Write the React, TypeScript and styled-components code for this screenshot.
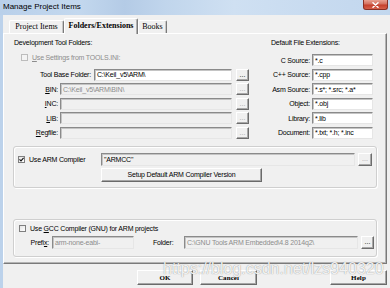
import React from "react";
import styled, { createGlobalStyle } from "styled-components";

const Global = createGlobalStyle`
  html, body { margin: 0; padding: 0; background: #f0f0f0; }
  body { width: 390px; height: 288px; overflow: hidden; }
`;

const Window = styled.div`
  position: relative;
  width: 390px;
  height: 288px;
  background: #f0f0f0;
  display: flex;
  flex-direction: column;
  overflow: hidden;
  font-family: "Liberation Sans", Arial, sans-serif;
  font-size: 7px;
  letter-spacing: -0.2px;
  color: #000;
`;

const TitleBar = styled.div`
  flex: none;
  height: 15px;
  display: flex;
  align-items: flex-start;
  background: linear-gradient(
    90deg,
    #b9d0ea 0%,
    #c3d8ee 20%,
    #b4cbe6 32%,
    #c0d5ec 42%,
    #cfe0f2 60%,
    #c8dbf0 80%,
    #c2d7ee 100%
  );
`;

const Title = styled.div`
  padding-left: 3px;
  line-height: 14px;
  font-size: 8px;
  letter-spacing: 0;
  color: #000;
`;

const CloseButton = styled.div`
  margin-left: auto;
  margin-right: 2px;
  width: 25px;
  height: 10px;
  box-sizing: border-box;
  border: 1px solid #8a3024;
  border-top: none;
  border-radius: 0 0 3px 3px;
  background: linear-gradient(#e9a191 0%, #d4705e 45%, #c5402c 55%, #d5604a 100%);
  display: flex;
  align-items: center;
  justify-content: center;
`;

const Frame = styled.div`
  flex: 1;
  display: flex;
  flex-direction: column;
  border-left: 3px solid #bcd2eb;
`;

const TabStrip = styled.div`
  position: relative;
  z-index: 1;
  flex: none;
  height: 18px;
  display: flex;
  align-items: flex-end;
  padding-left: 6px;
`;

const Tab = styled.div<{ $w: number; $active?: boolean }>`
  box-sizing: border-box;
  width: ${(p) => p.$w}px;
  height: ${(p) => (p.$active ? 16 : 13)}px;
  margin-bottom: ${(p) => (p.$active ? -1 : 0)}px;
  background: #f0f0f0;
  border-top: 1px solid #ffffff;
  border-left: 1px solid #ffffff;
  border-right: 1px solid #7a7a7a;
  box-shadow: ${(p) => (p.$active ? "inset -1px 0 0 #b0b0b0" : "inset -1px 0 0 #c8c8c8")};
  border-radius: 2px 2px 0 0;
  font-family: "Liberation Serif", "Times New Roman", serif;
  font-weight: ${(p) => (p.$active ? "bold" : "normal")};
  font-size: 8px;
  letter-spacing: 0;
  line-height: ${(p) => (p.$active ? 13 : 12)}px;
  text-align: center;
  white-space: nowrap;
`;

const TabPanel = styled.div`
  flex: none;
  box-sizing: border-box;
  width: 384px;
  height: 231px;
  border: 1px solid;
  border-color: #ffffff #7a7a7a #7a7a7a #ffffff;
  box-shadow: inset -1px -1px 0 #b4b4b4;
  padding: 5px 0 0 9px;
  display: flex;
  flex-direction: column;
`;

const TopSection = styled.div`
  display: flex;
  padding-left: 1px;
`;

const LeftCol = styled.div`
  width: 235px;
  display: flex;
  flex-direction: column;
`;

const RightCol = styled.div`
  width: 118px;
  margin-left: 6px;
  display: flex;
  flex-direction: column;
`;

const Header = styled.div<{ $indent?: number }>`
  height: 8px;
  line-height: 8px;
  padding-left: ${(p) => p.$indent ?? 0}px;
  white-space: nowrap;
`;

const CheckRow = styled.div<{ $top?: number; $indent?: number; $disabled?: boolean; $h?: number }>`
  display: flex;
  align-items: center;
  height: ${(p) => p.$h ?? 12}px;
  margin-top: ${(p) => p.$top ?? 0}px;
  padding-left: ${(p) => p.$indent ?? 0}px;
  color: ${(p) => (p.$disabled ? "#8d8d8d" : "#000")};
  white-space: nowrap;
`;

const Box = styled.div<{ $checked?: boolean; $disabled?: boolean }>`
  flex: none;
  box-sizing: border-box;
  width: 7px;
  height: 7px;
  margin-right: 4px;
  border: 1px solid ${(p) => (p.$disabled ? "#bcbcbc" : "#7f7f7f")};
  background: ${(p) => (p.$disabled ? "#f3f3f3" : "linear-gradient(135deg, #e4e4e4, #ffffff)")};
  display: flex;
  align-items: center;
  justify-content: center;
`;

const FieldGrid = styled.div<{ $top: number }>`
  margin-top: ${(p) => p.$top}px;
  display: grid;
  grid-auto-rows: 12px;
  row-gap: 2.6px;
`;

const FieldRow = styled.div`
  display: flex;
  align-items: stretch;
`;

const Label = styled.div<{ $w: number; $pad?: number; $align?: string; $lead?: number }>`
  flex: none;
  box-sizing: border-box;
  width: ${(p) => p.$w}px;
  padding-right: ${(p) => p.$pad ?? 2}px;
  padding-left: ${(p) => p.$lead ?? 0}px;
  display: flex;
  align-items: center;
  justify-content: ${(p) => (p.$align === "left" ? "flex-start" : "flex-end")};
  white-space: nowrap;
`;

const Edit = styled.div<{ $variant?: "normal" | "disabled" | "readonly"; $w?: number }>`
  ${(p) => (p.$w ? `width: ${p.$w}px; flex: none;` : "flex: 1;")}
  box-sizing: border-box;
  min-width: 0;
  border: 1px solid;
  border-color: #8a8a8a #e6e6e6 #e6e6e6 #8a8a8a;
  box-shadow: inset 1px 1px 0 #c4c4c4;
  background: ${(p) => (p.$variant === "normal" ? "#ffffff" : "#f0f0f0")};
  color: ${(p) => (p.$variant === "disabled" ? "#8d8d8d" : "#000")};
  padding-left: 2px;
  display: flex;
  align-items: center;
  overflow: hidden;
  white-space: pre;
`;

const DotButton = styled.div<{ $disabled?: boolean; $gap?: number; $w?: number }>`
  flex: none;
  box-sizing: border-box;
  width: ${(p) => p.$w ?? 13}px;
  margin-left: ${(p) => p.$gap ?? 4}px;
  border: 1px solid;
  border-color: #ffffff #6d6d6d #6d6d6d #ffffff;
  box-shadow: inset -1px -1px 0 #a8a8a8;
  background: #f0f0f0;
  color: ${(p) => (p.$disabled ? "#a0a0a0" : "#000")};
  display: flex;
  align-items: center;
  justify-content: center;
  font-size: 7px;
  letter-spacing: 0;
  line-height: 1;
  padding-bottom: 1px;
`;

const ExtGrid = styled.div`
  margin-top: 7px;
  display: grid;
  grid-template-columns: 57px 61px;
  grid-auto-rows: 12px;
  row-gap: 2.6px;
`;

const GroupBox = styled.div<{ $top: number; $h: number }>`
  flex: none;
  box-sizing: border-box;
  width: 364px;
  height: ${(p) => p.$h}px;
  margin-top: ${(p) => p.$top}px;
  border: 1px solid #cfcfcf;
  border-radius: 3px;
  box-shadow: inset 1px 1px 0 #ffffff, 1px 1px 0 #ffffff;
`;

const ArmGrid = styled.div`
  display: grid;
  grid-template-columns: 87px 1fr;
  grid-template-rows: 13px 14px;
  row-gap: 2px;
  padding: 6px 4px 0 0;
`;

const InlineRow = styled.div`
  display: flex;
  align-items: stretch;
`;

const PushButton = styled.div<{ $w: number; $h?: number; $gap?: number; $serif?: boolean }>`
  flex: none;
  box-sizing: border-box;
  width: ${(p) => p.$w}px;
  height: ${(p) => p.$h ?? 14}px;
  margin-left: ${(p) => p.$gap ?? 0}px;
  border: 1px solid;
  border-color: #ffffff #6a6a6a #6a6a6a #ffffff;
  box-shadow: inset -1px -1px 0 #a6a6a6;
  background: #f0f0f0;
  display: flex;
  align-items: center;
  justify-content: center;
  white-space: nowrap;
  ${(p) =>
    p.$serif
      ? `font-family: "Liberation Serif", "Times New Roman", serif; font-weight: bold; font-size: 7px; letter-spacing: 0.1px;`
      : ""}
`;

const GccBody = styled.div`
  display: flex;
  flex-direction: column;
  padding-top: 5px;
`;

const GccRow = styled.div`
  display: flex;
  align-items: stretch;
  height: 13px;
  margin-top: 3px;
`;

const ButtonBar = styled.div`
  flex: 1;
  display: flex;
  align-items: flex-start;
  padding-top: 6px;
`;

const U = styled.span`
  text-decoration: underline;
  text-underline-offset: 1px;
`;

const Watermark = styled.div`
  position: absolute;
  left: 163px;
  top: 260px;
  font-family: "Liberation Sans", Arial, sans-serif;
  font-size: 16px;
  line-height: 18px;
  letter-spacing: 0;
  color: rgba(255, 255, 255, 0.9);
  text-shadow: 0 0 1px rgba(80, 80, 80, 0.7);
  pointer-events: none;
  white-space: nowrap;
`;

const Check = () => (
  <svg width="5" height="5" viewBox="0 0 5 5">
    <path d="M0.5 2.4 L2 3.9 L4.6 0.8" fill="none" stroke="#111" strokeWidth="1.1" />
  </svg>
);

const CloseX = () => (
  <svg width="7" height="6" viewBox="0 0 7 6">
    <path d="M1 0.8 L6 5.2 M6 0.8 L1 5.2" stroke="#ffffff" strokeWidth="1.5" strokeLinecap="round" />
  </svg>
);

const folderRows: { label: React.ReactNode; value: string }[] = [
  { label: <><U>B</U>IN:</>, value: "C:\\Keil_v5\\ARM\\BIN\\" },
  { label: <><U>I</U>NC:</>, value: "" },
  { label: <><U>L</U>IB:</>, value: "" },
  { label: <><U>R</U>egfile:</>, value: "" },
];

const extRows = [
  { label: "C Source:", value: "*.c" },
  { label: "C++ Source:", value: "*.cpp" },
  { label: "Asm Source:", value: "*.s*; *.src; *.a*" },
  { label: "Object:", value: "*.obj" },
  { label: "Library:", value: "*.lib" },
  { label: "Document:", value: "*.txt; *.h; *.inc" },
];

const gccFolder = "C:\\GNU Tools ARM Embedded\\4.8 2014q2\\";

export default function App() {
  return (
    <>
      <Global />
      <Window>
        <TitleBar>
          <Title>Manage Project Items</Title>
          <CloseButton>
            <CloseX />
          </CloseButton>
        </TitleBar>
        <Frame>
          <TabStrip>
            <Tab $w={55}>Project Items</Tab>
            <Tab $w={74} $active>
              Folders/Extensions
            </Tab>
            <Tab $w={29}>Books</Tab>
          </TabStrip>
          <TabPanel>
            <TopSection>
              <LeftCol>
                <Header>Development Tool Folders:</Header>
                <CheckRow $top={4} $indent={7} $disabled>
                  <Box $disabled />
                  <span>
                    <U>U</U>se Settings from TOOLS.INI:
                  </span>
                </CheckRow>
                <FieldGrid $top={5.6}>
                  <FieldRow>
                    <Label $w={80} $pad={3}>
                      Tool Base Folder:
                    </Label>
                    <Edit $variant="normal">{"C:\\Keil_v5\\ARM\\"}</Edit>
                    <DotButton>...</DotButton>
                  </FieldRow>
                  {folderRows.map((r, i) => (
                    <FieldRow key={i}>
                      <Label $w={46}>{r.label}</Label>
                      <Edit $variant="disabled">{r.value}</Edit>
                      <DotButton $disabled>...</DotButton>
                    </FieldRow>
                  ))}
                </FieldGrid>
              </LeftCol>
              <RightCol>
                <Header $indent={16}>Default File Extensions:</Header>
                <ExtGrid>
                  {extRows.map((r) => (
                    <React.Fragment key={r.label}>
                      <Label $w={57}>{r.label}</Label>
                      <Edit $variant="normal">{r.value}</Edit>
                    </React.Fragment>
                  ))}
                </ExtGrid>
              </RightCol>
            </TopSection>

            <GroupBox $top={7} $h={42}>
              <ArmGrid>
                <CheckRow $indent={4} $h={13}>
                  <Box $checked>
                    <Check />
                  </Box>
                  <span>Use ARM Compiler</span>
                </CheckRow>
                <InlineRow>
                  <Edit $variant="readonly">"ARMCC"</Edit>
                  <DotButton $disabled $gap={3} $w={14}>
                    ...
                  </DotButton>
                </InlineRow>
                <span />
                <InlineRow>
                  <PushButton $w={161}>Setup Default ARM Compiler Version</PushButton>
                </InlineRow>
              </ArmGrid>
            </GroupBox>

            <GroupBox $top={31} $h={38}>
              <GccBody>
                <CheckRow $indent={5} $h={8}>
                  <Box />
                  <span>
                    Use <U>G</U>CC Compiler (GNU) for ARM projects
                  </span>
                </CheckRow>
                <GccRow>
                  <Label $w={38} $pad={3}>
                    <span>
                      Prefi<U>x</U>:
                    </span>
                  </Label>
                  <Edit $variant="disabled" $w={82}>
                    arm-none-eabi-
                  </Edit>
                  <Label $w={50} $align="left" $pad={0} $lead={19}>
                    Folder:
                  </Label>
                  <Edit $variant="disabled" $w={174}>
                    {gccFolder}
                  </Edit>
                  <DotButton $gap={3}>...</DotButton>
                </GccRow>
              </GccBody>
            </GroupBox>
          </TabPanel>
          <ButtonBar>
            <PushButton $w={56} $h={15} $gap={134} $serif>
              OK
            </PushButton>
            <PushButton $w={57} $h={15} $gap={7} $serif>
              Cancel
            </PushButton>
            <PushButton $w={57} $h={15} $gap={73} $serif>
              Help
            </PushButton>
          </ButtonBar>
        </Frame>
        <Watermark>https://blog.csdn.net/lzs940320</Watermark>
      </Window>
    </>
  );
}
